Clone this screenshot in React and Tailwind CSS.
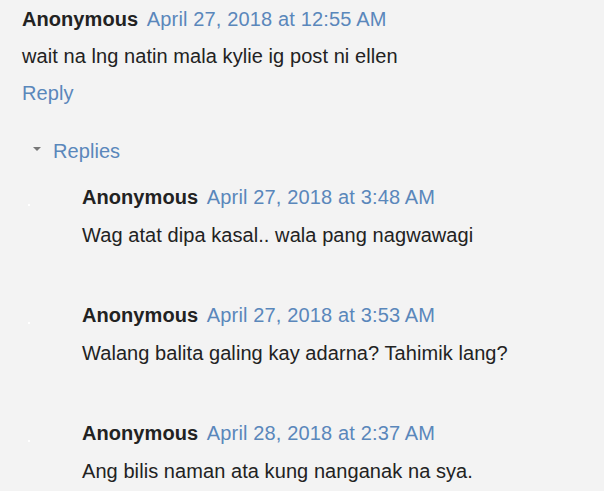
const replies = [
  { date: "April 27, 2018 at 3:48 AM", text: "Wag atat dipa kasal.. wala pang nagwawagi" },
  { date: "April 27, 2018 at 3:53 AM", text: "Walang balita galing kay adarna? Tahimik lang?" },
  { date: "April 28, 2018 at 2:37 AM", text: "Ang bilis naman ata kung nanganak na sya." },
]

function Header({ date }) {
  return (
    <div className="h-6 leading-6 whitespace-nowrap">
      <span className="font-bold text-[#222]">Anonymous</span>{" "}
      <a className="ml-[3px] tracking-[0.15px] text-[#5a87bb]">{date}</a>
    </div>
  )
}

export default function App() {
  return (
    <div className="w-[604px] h-[491px] overflow-hidden bg-[#f3f3f3] font-['Liberation_Sans',Arial,sans-serif] text-[20px] text-[#222] tracking-[0.07px]">
      <div className="pl-[22px] pt-[7px]">
        <Header date="April 27, 2018 at 12:55 AM" />
        <div className="mt-[13px] h-6 leading-6">wait na lng natin mala kylie ig post ni ellen</div>
        <div className="mt-[13px] h-6 leading-6 text-[#5a87bb]">Reply</div>

        {/* Replies thread */}
        <div className="mt-[34px] flex items-center h-6 leading-6">
          <span className="ml-[11px] w-0 h-0 border-l-[4px] border-r-[4px] border-t-[4px] border-l-transparent border-r-transparent border-t-[#777] mb-[4px]" />
          <span className="ml-[12px] text-[#5a87bb]">Replies</span>
        </div>

        <div className="mt-[22px] flex flex-col gap-[56px]">
          {replies.map((r, i) => (
            <div key={i} className="flex">
              <div className="w-[60px] relative">
                <span className="absolute left-[6px] top-[19px] w-[2px] h-[2px] bg-white" />
              </div>
              <div>
                <Header date={r.date} />
                <div className="mt-[14px] h-6 leading-6">{r.text}</div>
              </div>
            </div>
          ))}
        </div>
      </div>
    </div>
  )
}
